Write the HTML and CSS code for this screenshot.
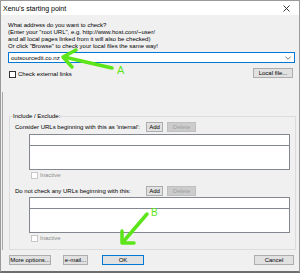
FILE: index.html
```html
<!DOCTYPE html>
<html lang="en">
<head>
    <meta charset="UTF-8" />
    <title>Xenu's starting point</title>
    <link rel="stylesheet" href="styles.css">
</head>
<body>
    <div class="dialog">
        <div class="titlebar">
            <span class="title">Xenu's starting point</span>
            <svg class="close" width="7" height="7" viewBox="0 0 7 7">
                <path d="M0.5 0.5 L6.5 6.5 M6.5 0.5 L0.5 6.5" stroke="#222" stroke-width="0.9" fill="none"/>
            </svg>
        </div>

        <div class="content">
            <p class="intro">What address do you want to check?<br>(Enter your "root URL", e.g. http://www.host.com/~user/<br>and all local pages linked from it will also be checked)<br>Or click "Browse" to check your local files the same way!</p>

            <div class="combo">
                <span class="combo-text">outsourcedit.co.nz</span>
                <svg class="combo-arrow" width="6" height="4" viewBox="0 0 6 4">
                    <path d="M0.5 0.8 L3 3.2 L5.5 0.8" stroke="#555" stroke-width="0.8" fill="none"/>
                </svg>
            </div>

            <div class="check-row">
                <label class="check"><span class="box"></span>Check external links</label>
                <button class="btn local-btn">Local file...</button>
            </div>

            <fieldset class="group">
                <legend>Include / Exclude:</legend>

                <div class="list-head">
                    <span class="list-label">Consider URLs beginning with this as 'internal':</span>
                    <button class="btn add-btn">Add</button>
                    <button class="btn del-btn" disabled>Delete</button>
                </div>
                <div class="listbox">
                    <div class="list-edit"></div>
                    <div class="list-items"></div>
                </div>
                <label class="check inactive"><span class="box"></span>Inactive</label>

                <div class="list-head second">
                    <span class="list-label">Do not check any URLs beginning with this:</span>
                    <button class="btn add-btn">Add</button>
                    <button class="btn del-btn" disabled>Delete</button>
                </div>
                <div class="listbox tight">
                    <div class="list-edit"></div>
                    <div class="list-items"></div>
                </div>
                <label class="check inactive"><span class="box"></span>Inactive</label>
            </fieldset>

            <div class="buttons">
                <button class="btn more-btn">More options...</button>
                <button class="btn mail-btn">e-mail...</button>
                <button class="btn ok-btn">OK</button>
                <button class="btn cancel-btn">Cancel</button>
            </div>
        </div>

        <!-- annotations drawn over the dialog -->
        <svg class="annot" width="300" height="273" viewBox="0 0 300 273">
            <g stroke="#5ce619" stroke-width="3.5" stroke-linecap="round" stroke-linejoin="round" fill="none">
                <path d="M112 68 L64 57"/>
                <path d="M76 50 L63 57 L72 67"/>
                <path d="M147 214 L123 242"/>
                <path d="M122 231 L122 243 L134 243"/>
            </g>
            <text class="mark" x="117" y="74">A</text>
            <text class="mark small" x="151" y="216">B</text>
        </svg>
    </div>
</body>
</html>
```

FILE: styles.css
```css
body {
    margin: 0;
    font-family: "Liberation Sans", Arial, sans-serif;
    font-size: 6px;
    color: #000;
}
.dialog {
    position: relative;
    width: 300px;
    height: 273px;
    box-sizing: border-box;
    border: 1px solid #9a9a9a;
    border-bottom: 2px solid #6d6d6d;
    background: #f0f0f0;
    overflow: hidden;
}
/* faint frame line down the left side */
.dialog::before {
    content: "";
    position: absolute;
    left: 1px;
    top: 91px;
    width: 1px;
    height: 158px;
    background: #a8a8a8;
}
.titlebar {
    height: 14px;
    background: #fff;
    display: flex;
    align-items: center;
    justify-content: space-between;
    padding: 0 9px 0 2px;
}
.title {
    font-size: 7px;
}
.content {
    padding: 7px 4px 0 7px;
}
.intro {
    margin: 0;
    line-height: 7px;
}
.combo {
    margin-top: 2px;
    height: 11px;
    box-sizing: border-box;
    border: 1px solid #0078d7;
    background: #fff;
    display: flex;
    align-items: center;
    justify-content: space-between;
    padding: 0 3px 0 2px;
}
.check-row {
    margin-top: 5px;
    display: flex;
    justify-content: space-between;
    align-items: flex-end;
}
.check {
    display: flex;
    align-items: center;
    gap: 2px;
    line-height: 7px;
    margin-left: 1px;
}
.box {
    width: 5px;
    height: 5px;
    border: 1px solid #333;
    background: #fff;
}
.btn {
    height: 10px;
    box-sizing: border-box;
    padding: 0;
    border: 1px solid #adadad;
    background: #e1e1e1;
    font-family: inherit;
    font-size: 6px;
    color: #000;
    line-height: 8px;
}
.btn:disabled {
    background: #cccccc;
    border-color: #bfbfbf;
    color: #a0a0a0;
}
.local-btn {
    width: 40px;
    margin-right: 2px;
}
.group {
    margin: 35px -1px 0 1px;
    padding: 2px 5px 7px 5px;
    border: 1px solid #dcdcdc;
    min-width: 0;
}
.group legend {
    padding: 0;
    margin-left: -2px;
    line-height: 7px;
}
.list-head {
    display: flex;
    align-items: center;
    height: 10px;
}
.list-head.second {
    margin-top: 7px;
}
.list-label {
    width: 129px;
}
.add-btn {
    width: 17px;
    margin-left: 2px;
}
.del-btn {
    width: 29px;
    margin-left: 4px;
}
.listbox {
    margin: 2px 0 0 14px;
}
.listbox.tight {
    margin-top: 1px;
}
.list-edit {
    height: 12px;
    box-sizing: border-box;
    border: 1px solid #828790;
    background: #fff;
}
.list-items {
    height: 24px;
    box-sizing: border-box;
    border: 1px solid #828790;
    border-top: none;
    background: #fff;
}
.check.inactive {
    margin: 2px 0 0 16px;
    color: #8d8d8d;
}
.check.inactive .box {
    border-color: #c8c8c8;
}
.buttons {
    margin: 5px 0 0 1px;
    display: flex;
}
.more-btn {
    width: 42px;
}
.mail-btn {
    width: 25px;
    margin-left: 12px;
}
.ok-btn {
    width: 42px;
    margin-left: 14px;
    border-color: #0078d7;
}
.cancel-btn {
    width: 40px;
    margin-left: auto;
    margin-right: 1px;
}
.annot {
    position: absolute;
    left: -1px;
    top: -1px;
    pointer-events: none;
}
.mark {
    font-family: "Liberation Sans", Arial, sans-serif;
    font-size: 11px;
    fill: #5ce619;
}
.mark.small {
    font-size: 10px;
}
```
